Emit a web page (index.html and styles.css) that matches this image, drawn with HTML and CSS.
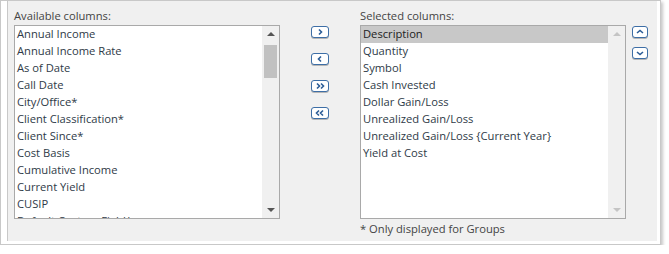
FILE: index.html
```html
<!DOCTYPE html>
<html lang="en">
<head>
  <meta charset="UTF-8">
  <title>Columns</title>
  <link rel="stylesheet" href="styles.css">
</head>
<body>
  <div class="frame">
    <div class="panel">
      <div class="column">
        <div class="label">Available columns:</div>
        <div class="listbox">
          <div class="items">
            <div class="item">Annual Income</div>
            <div class="item">Annual Income Rate</div>
            <div class="item">As of Date</div>
            <div class="item">Call Date</div>
            <div class="item">City/Office*</div>
            <div class="item">Client Classification*</div>
            <div class="item">Client Since*</div>
            <div class="item">Cost Basis</div>
            <div class="item">Cumulative Income</div>
            <div class="item">Current Yield</div>
            <div class="item">CUSIP</div>
            <div class="item">Default Custom Field*</div>
          </div>
          <div class="scrollbar">
            <span class="arrow up"></span>
            <span class="thumb"></span>
            <span class="arrow down"></span>
          </div>
        </div>
      </div>

      <div class="moves">
        <button class="btn" title="Add">
          <svg width="16" height="10" viewBox="0 0 16 10"><path d="M7 2.5 L9.5 5 L7 7.5" /></svg>
        </button>
        <button class="btn" title="Remove">
          <svg width="16" height="10" viewBox="0 0 16 10"><path d="M9 2.5 L6.5 5 L9 7.5" /></svg>
        </button>
        <button class="btn" title="Add all">
          <svg width="16" height="10" viewBox="0 0 16 10"><path d="M5 2.5 L7.5 5 L5 7.5 M9 2.5 L11.5 5 L9 7.5" /></svg>
        </button>
        <button class="btn" title="Remove all">
          <svg width="16" height="10" viewBox="0 0 16 10"><path d="M7 2.5 L4.5 5 L7 7.5 M11 2.5 L8.5 5 L11 7.5" /></svg>
        </button>
      </div>

      <div class="column">
        <div class="label">Selected columns:</div>
        <div class="listbox">
          <div class="items">
            <div class="item selected">Description</div>
            <div class="item">Quantity</div>
            <div class="item">Symbol</div>
            <div class="item">Cash Invested</div>
            <div class="item">Dollar Gain/Loss</div>
            <div class="item">Unrealized Gain/Loss</div>
            <div class="item">Unrealized Gain/Loss {Current Year}</div>
            <div class="item">Yield at Cost</div>
          </div>
          <div class="scrollbar disabled">
            <span class="arrow up"></span>
            <span class="arrow down"></span>
          </div>
        </div>
        <div class="note">* Only displayed for Groups</div>
      </div>

      <div class="order">
        <button class="btn small" title="Move up">
          <svg width="14" height="10" viewBox="0 0 14 10"><path d="M4 6 L7 3.5 L10 6" /></svg>
        </button>
        <button class="btn small" title="Move down">
          <svg width="14" height="10" viewBox="0 0 14 10"><path d="M4 4 L7 6.5 L10 4" /></svg>
        </button>
      </div>
    </div>
  </div>
</body>
</html>
```

FILE: styles.css
```css
body {
  margin: 0;
  background: #fff;
  font-family: "Segoe UI", "Open Sans", sans-serif;
  font-size: 11.2px;
}
.frame {
  width: 650px;
  height: 240px;
  padding: 0 3px 3px 6px;
  background: #fff;
  border: 1px solid #c8c8c8;
  box-shadow: 2px 2px 3px rgba(0, 0, 0, 0.22);
}
.panel {
  display: flex;
  height: 240px;
  box-sizing: border-box;
  padding: 7px 0 0 6px;
  background: #f0f0f0;
  border-left: 1px solid #c8c8c8;
}
.column {
  width: 266px;
}
.label {
  height: 16px;
  line-height: 16px;
  margin-bottom: 1px;
  color: #444;
}
.listbox {
  display: flex;
  height: 194px;
  box-sizing: border-box;
  background: #fff;
  border: 1px solid #a9a9a9;
  overflow: hidden;
}
.items {
  flex: 1;
  overflow: hidden;
}
.item {
  height: 17px;
  line-height: 16px;
  padding-left: 2px;
  color: #2e3a47;
  white-space: nowrap;
}
.item.selected {
  background: #c8c8c8;
  color: #222;
}
.scrollbar {
  width: 17px;
  flex-shrink: 0;
  background: #f0f0f0;
  position: relative;
}
.thumb {
  position: absolute;
  left: 2px;
  top: 19px;
  width: 13px;
  height: 33px;
  background: #c1c1c1;
}
.arrow {
  position: absolute;
  left: 5px;
  width: 0;
  height: 0;
  border-left: 4px solid transparent;
  border-right: 4px solid transparent;
}
.arrow.up {
  top: 6px;
  border-bottom: 4px solid #555;
}
.arrow.down {
  bottom: 6px;
  border-top: 4px solid #555;
}
.disabled .arrow.up {
  border-bottom-color: #c4c4c4;
}
.disabled .arrow.down {
  border-top-color: #c4c4c4;
}
.moves {
  display: flex;
  flex-direction: column;
  gap: 15px;
  padding-top: 18px;
  margin: 0 31px;
}
.order {
  display: flex;
  flex-direction: column;
  gap: 9px;
  padding-top: 18px;
  margin-left: 6px;
}
.btn {
  display: flex;
  align-items: center;
  justify-content: center;
  width: 18px;
  height: 12px;
  padding: 0;
  background: #fff;
  border: 1px solid #3d6ea6;
  border-radius: 3px;
  box-shadow: 0 1px 0 #b5b5b5;
  cursor: pointer;
}
.btn.small {
  width: 16px;
}
.btn svg {
  fill: none;
  stroke: #2b5c96;
  stroke-width: 1.6;
}
.note {
  margin-top: 2px;
  line-height: 16px;
  color: #444;
}
```
